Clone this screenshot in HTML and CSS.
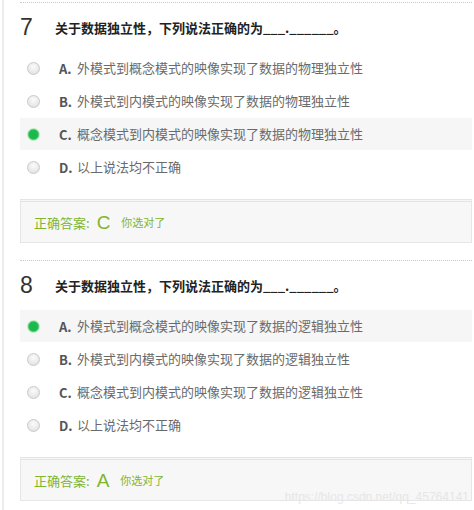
FILE: index.html
```html
<!DOCTYPE html>
<html lang="zh">
<head>
<meta charset="utf-8">
<link rel="stylesheet" href="styles.css">
</head>
<body>
<div class="page">
  <div class="question">
    <div class="q-head"><span class="q-num">7</span><span class="q-title">关于数据独立性，下列说法正确的为___.______。</span></div>
    <ul class="options">
      <li class="opt"><span class="radio"></span><span class="letter">A.</span><span class="text">外模式到概念模式的映像实现了数据的物理独立性</span></li>
      <li class="opt"><span class="radio"></span><span class="letter">B.</span><span class="text">外模式到内模式的映像实现了数据的物理独立性</span></li>
      <li class="opt selected"><span class="radio on"></span><span class="letter">C.</span><span class="text">概念模式到内模式的映像实现了数据的物理独立性</span></li>
      <li class="opt"><span class="radio"></span><span class="letter">D.</span><span class="text">以上说法均不正确</span></li>
    </ul>
    <div class="answer"><span class="a-label">正确答案:</span><span class="a-key">C</span><span class="a-note">你选对了</span></div>
  </div>
  <div class="question">
    <div class="q-head"><span class="q-num">8</span><span class="q-title">关于数据独立性，下列说法正确的为___.______。</span></div>
    <ul class="options">
      <li class="opt selected"><span class="radio on"></span><span class="letter">A.</span><span class="text">外模式到概念模式的映像实现了数据的逻辑独立性</span></li>
      <li class="opt"><span class="radio"></span><span class="letter">B.</span><span class="text">外模式到内模式的映像实现了数据的逻辑独立性</span></li>
      <li class="opt"><span class="radio"></span><span class="letter">C.</span><span class="text">概念模式到内模式的映像实现了数据的逻辑独立性</span></li>
      <li class="opt"><span class="radio"></span><span class="letter">D.</span><span class="text">以上说法均不正确</span></li>
    </ul>
    <div class="answer"><span class="a-label">正确答案:</span><span class="a-key">A</span><span class="a-note">你选对了</span></div>
  </div>
  <div class="watermark">https://blog.csdn.net/qq_45764141</div>
</div>
</body>
</html>
```

FILE: styles.css
```css
html, body {
  margin: 0;
  padding: 0;
  background: #fff;
}
body {
  font-family: "Noto Sans CJK SC", "Liberation Sans", sans-serif;
  color: #333;
  width: 474px;
  height: 510px;
  overflow: hidden;
}
.page {
  position: relative;
  margin-left: 2px;
  border-left: 2px solid #ececec;
  padding: 2px 2px 0 16px;
  height: 508px;
}
.question {
  border-top: 1px dotted #c8c8c8;
  padding-bottom: 17px;
}
.q-head {
  display: flex;
  align-items: center;
  height: 49px;
}
.q-num {
  width: 35px;
  font-family: "Liberation Sans", sans-serif;
  font-size: 23px;
  color: #333;
  line-height: 1;
}
.q-title {
  font-size: 13px;
  font-weight: bold;
  color: #222;
}
.options {
  list-style: none;
  margin: 0;
  padding: 0;
}
.opt {
  display: flex;
  align-items: center;
  height: 32px;
  margin-bottom: 1px;
  font-size: 13px;
  line-height: 18px;
  color: #6a6a6a;
}
.opt.selected {
  background: #f6f6f6;
}
.radio {
  box-sizing: border-box;
  width: 13px;
  height: 13px;
  border-radius: 50%;
  margin-left: 7px;
  margin-right: 19px;
  border: 1px solid #c9c9c9;
  background: radial-gradient(circle at 50% 35%, #fbfbfb 0%, #e6e6e6 70%, #dcdcdc 100%);
}
.radio.on {
  border: 1px solid #b9e6c4;
  background: radial-gradient(circle, #18b848 0%, #1dbb4b 55%, #7fd69a 75%, #d6f1dd 100%);
}
.letter {
  font-weight: bold;
  color: #555;
  width: 18px;
  font-size: 13px;
  line-height: 18px;
  padding-top: 1px;
}
.answer {
  margin-top: 16px;
  height: 40px;
  display: flex;
  align-items: center;
  padding-left: 13px;
  background: #f7f7f7;
  border: 1px solid #e6e6e6;
  border-top: 3px double #e4e4e4;
  color: #80b52e;
}
.a-label {
  font-size: 13px;
}
.a-key {
  font-family: "Liberation Sans", sans-serif;
  font-size: 19px;
  margin: 0 11px 0 7px;
  line-height: 1;
}
.a-note {
  font-size: 11px;
}
.watermark {
  position: absolute;
  right: 5px;
  bottom: 6px;
  font-family: "Liberation Sans", sans-serif;
  font-size: 12px;
  color: #e6e6e6;
}
```
